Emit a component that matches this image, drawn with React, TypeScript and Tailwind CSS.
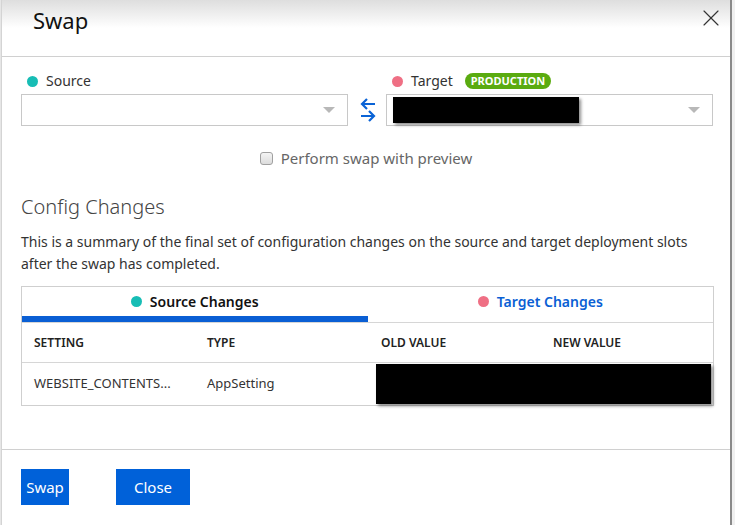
import { X } from "lucide-react";

const font = { fontFamily: '"Noto Sans", "Open Sans", sans-serif' };

function Dot({ color }: { color: string }) {
  return <span className={`inline-block h-[11px] w-[11px] rounded-full ${color}`} />;
}

function Caret() {
  return (
    <svg width="12" height="7" viewBox="0 0 12 7" className="shrink-0">
      <path d="M0 0 L12 0 L6 6 Z" fill="#b8b8b8" />
    </svg>
  );
}

function SwapArrows() {
  return (
    <svg width="16" height="26" viewBox="0 0 16 26" fill="none" stroke="#0a63d6" strokeWidth="2.2">
      <path d="M15 7 H2 M7 2 L2 7 L7 12" />
      <path d="M1 19 H14 M9 14 L14 19 L9 24" />
    </svg>
  );
}

export default function App() {
  return (
    <div className="flex h-[525px] w-[735px] overflow-hidden bg-white text-[#222]" style={font}>
      <div className="w-[1px] shrink-0 bg-[#e6e6e6]" />
      <div className="flex w-[729px] shrink-0 flex-col border-l border-[#d4d4d4]">
        {/* header */}
        <div className="flex h-[57px] shrink-0 items-start justify-between border-b border-[#d0d0d0] bg-gradient-to-b from-[#dedede] via-white via-50% to-white pl-[31px] pr-[5px]">
          <h1 className="mt-[5px] text-[22px] leading-[30px] text-[#111]">Swap</h1>
          <X className="mt-[4px] h-[28px] w-[28px] text-[#333]" strokeWidth={1} />
        </div>

        {/* slots */}
        <div className="flex items-end pl-[19px] pt-[14px]">
          <div className="flex w-[327px] flex-col">
            <div className="flex items-center gap-[8px] pl-[6px] text-[14px] leading-[20px] text-[#333]">
              <Dot color="bg-[#17bdb5]" />
              <span>Source</span>
            </div>
            <div className="mt-[3px] flex h-[32px] items-center justify-end border border-[#c8c8c8] pr-[12px]">
              <Caret />
            </div>
          </div>
          <div className="mb-[3px] ml-[12px] mr-[10px]">
            <SwapArrows />
          </div>
          <div className="flex w-[327px] flex-col">
            <div className="flex items-center gap-[8px] pl-[6px] text-[14px] leading-[20px] text-[#333]">
              <Dot color="bg-[#ef6f84]" />
              <span>Target</span>
              <span className="ml-[4px] rounded-full bg-[#5aab10] px-[6px] text-[11px] font-bold leading-[16px] text-white">
                PRODUCTION
              </span>
            </div>
            <div className="mt-[3px] flex h-[32px] items-center justify-between border border-[#c8c8c8] pl-[6px] pr-[12px]">
              <div className="h-[26px] w-[186px] bg-black shadow-[2px_2px_3px_rgba(0,0,0,0.45)]" />
              <Caret />
            </div>
          </div>
        </div>

        {/* preview checkbox */}
        <div className="mt-[22px] flex items-center justify-center gap-[8px] text-[15px] leading-[20px] text-[#666]">
          <span className="h-[13px] w-[13px] rounded-[3px] border border-[#a0a0a0] bg-gradient-to-b from-[#f4f4f4] to-[#dcdcdc]" />
          <span>Perform swap with preview</span>
        </div>

        {/* config changes */}
        <div className="pl-[19px] pr-[16px]">
          <h2 className="mt-[25px] text-[20px] font-light leading-[28px] text-[#444]">Config Changes</h2>
          <p className="mt-[10px] max-w-[676px] text-[14px] leading-[22px] text-[#333]">
            This is a summary of the final set of configuration changes on the source and target deployment slots
            after the swap has completed.
          </p>

          <div className="mt-[11px] border border-[#cfcfcf]">
            <div className="flex h-[36px] border-b border-[#d6d6d6]">
              <div className="flex flex-1 flex-col">
                <div className="flex flex-1 items-center justify-center gap-[8px] text-[14px] font-semibold text-[#111]">
                  <Dot color="bg-[#17bdb5]" />
                  <span>Source Changes</span>
                </div>
                <div className="h-[6px] bg-[#0a5fd4]" />
              </div>
              <div className="flex flex-1 items-center justify-center gap-[8px] pb-[6px] text-[14px] font-semibold text-[#0a5fd4]">
                <Dot color="bg-[#ef6f84]" />
                <span>Target Changes</span>
              </div>
            </div>
            <div className="grid h-[40px] grid-cols-[173px_173px_173px_1fr] items-center border-b border-[#d6d6d6] pl-[12px] text-[12px] font-semibold text-[#222]">
              <span>SETTING</span>
              <span>TYPE</span>
              <span className="pl-[1px]">OLD VALUE</span>
              <span>NEW VALUE</span>
            </div>
            <div className="grid h-[42px] grid-cols-[173px_173px_1fr] items-center pl-[12px] text-[13px] text-[#333]">
              <span>WEBSITE_CONTENTS...</span>
              <span>AppSetting</span>
              <div className="-ml-[4px] mr-[2px] h-[40px] bg-black shadow-[2px_2px_3px_rgba(0,0,0,0.45)]" />
            </div>
          </div>
        </div>

        {/* footer */}
        <div className="mt-auto border-t border-[#d0d0d0] px-[19px] pb-[20px] pt-[19px]">
          <div className="flex gap-[47px]">
            <button className="h-[36px] w-[48px] bg-[#0061d9] text-[15px] text-white">Swap</button>
            <button className="h-[36px] w-[74px] bg-[#0061d9] text-[15px] text-white">Close</button>
          </div>
        </div>
      </div>
      <div className="w-[2px] shrink-0 bg-[#8a8a8a]" />
      <div className="flex-1 bg-[#f0f0f0]" />
    </div>
  );
}
